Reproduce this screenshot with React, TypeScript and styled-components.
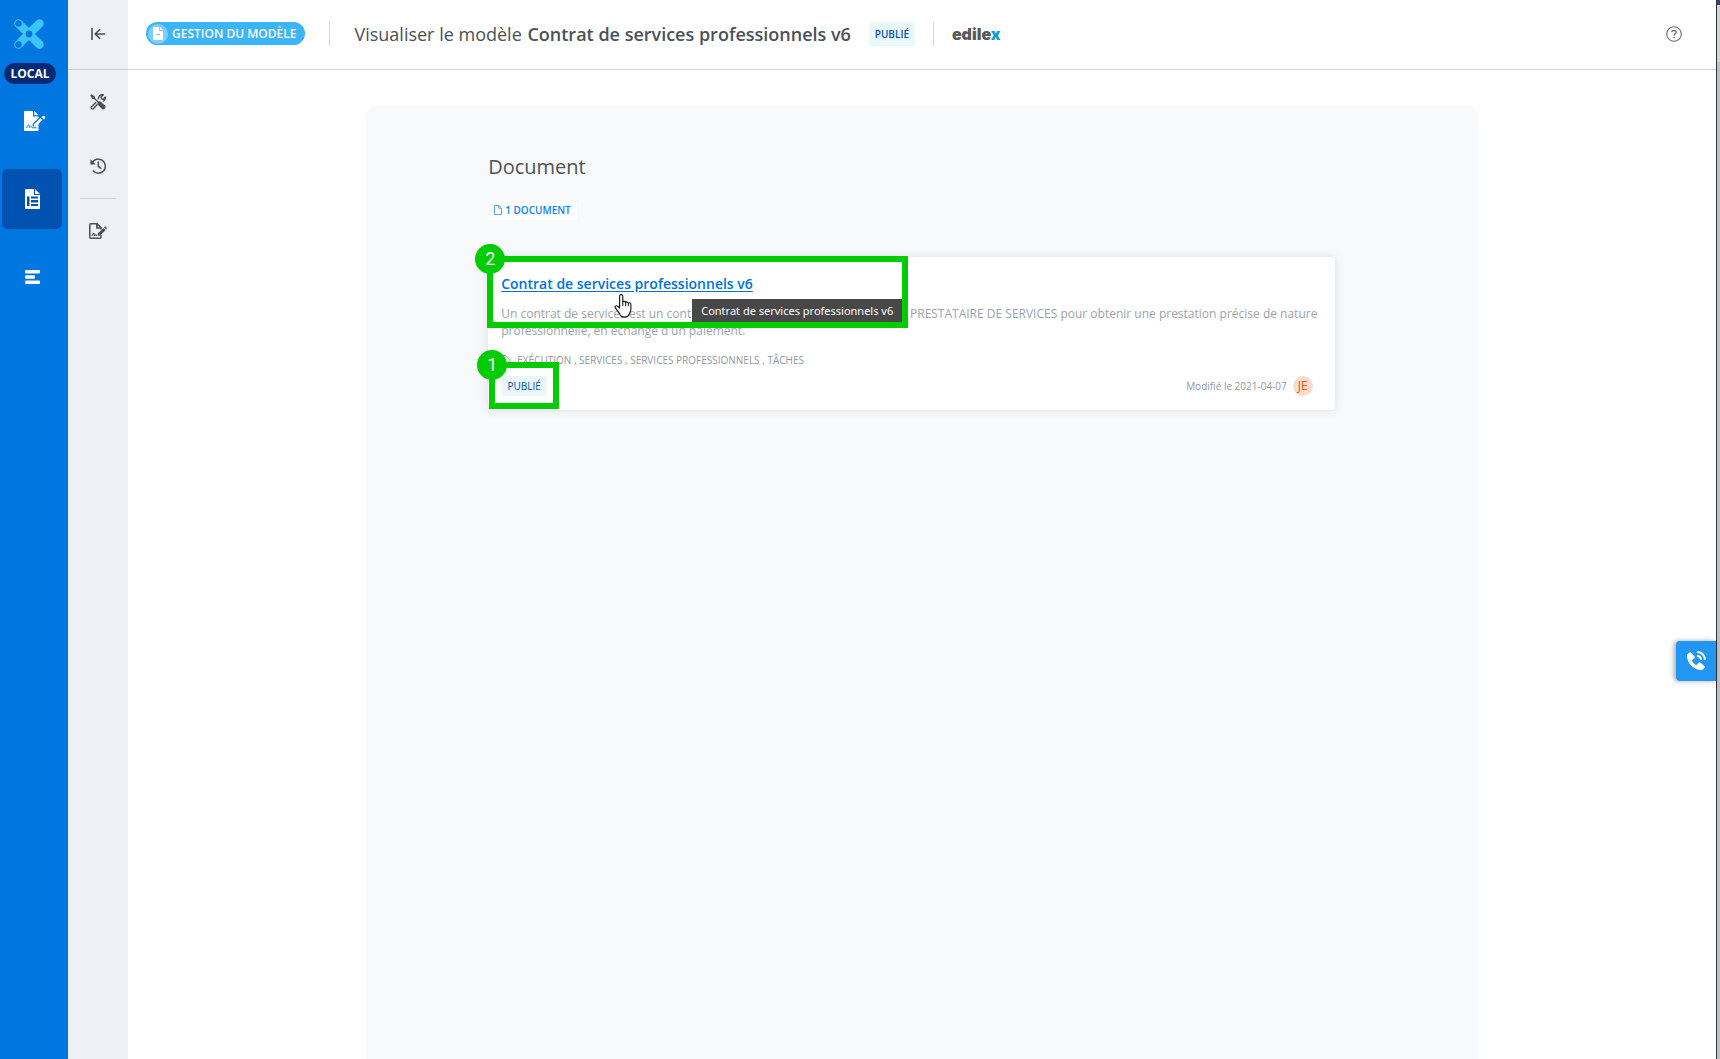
import React from "react";
import styled, { createGlobalStyle } from "styled-components";
import { BiSolidPhoneCall } from "react-icons/bi";

const GlobalStyle = createGlobalStyle`
  *, *::before, *::after { box-sizing: border-box; }
  body {
    margin: 0;
    background: #fff;
    color: #4b5157;
    font-family: "Open Sans", "Noto Sans", sans-serif;
    font-size: 12px;
  }
  button { font: inherit; color: inherit; border: 0; padding: 0; background: none; cursor: pointer; }
  h1, h2, h3, p, ul { margin: 0; padding: 0; font-weight: 400; }
  svg { display: block; flex: none; }
`;

const Shell = styled.div`
  display: flex;
  min-height: 100vh;
`;

const MainNav = styled.nav`
  display: flex;
  flex-direction: column;
  flex: 0 0 68px;
  align-items: flex-start;
  padding: 18px 2px 0;
  background: #0077e0;
  color: #fff;
`;

const LogoLink = styled.a`
  display: flex;
  margin-left: 11px;
  color: #3cc5fd;
`;

const EnvPill = styled.span`
  margin: 13px 0 7px 2px;
  width: 52px;
  line-height: 21px;
  border-radius: 11px;
  background: #012a75;
  font-size: 12px;
  font-weight: 700;
  text-align: center;
`;

const NavList = styled.div`
  display: flex;
  flex-direction: column;
  gap: 18px;
`;

const NavButton = styled.button<{ $active?: boolean }>`
  display: flex;
  align-items: center;
  justify-content: center;
  width: 60px;
  height: 60px;
  border-radius: 5px;
  background: ${(p) => (p.$active ? "#0052b1" : "transparent")};
`;

const Workspace = styled.div`
  display: flex;
  flex: 1;
  flex-direction: column;
  min-width: 0;
`;

const Header = styled.header`
  display: flex;
  height: 70px;
  border-bottom: 1px solid #ced4de;
`;

const CollapseCell = styled.div`
  display: flex;
  flex: 0 0 60px;
  align-items: center;
  justify-content: center;
  padding-bottom: 2px;
  background: #edf1f5;
`;

const HeaderBar = styled.div`
  display: flex;
  flex: 1;
  align-items: center;
  padding: 0 34px 2px 18px;
`;

const SectionPill = styled.span`
  display: flex;
  align-items: center;
  gap: 4px;
  height: 23px;
  margin-right: 24px;
  padding: 0 9px 0 2px;
  border-radius: 12px;
  background: #3bb4f8;
  color: #fff;
  font-size: 12px;
  font-weight: 600;
  white-space: nowrap;
`;

const PillIcon = styled.span`
  display: flex;
  align-items: center;
  justify-content: center;
  width: 20px;
  height: 20px;
  border-radius: 50%;
  background: #7fcdfb;
`;

const Divider = styled.span`
  width: 1px;
  height: 24px;
  background: #ced4de;
`;

const PageTitle = styled.h1`
  margin: 0 18px 0 24px;
  font-size: 18px;
  line-height: 28px;
  white-space: nowrap;
  strong { font-weight: 600; margin-left: 1px; }
`;

const StatusBadge = styled.span<{ $tall?: boolean }>`
  width: 46px;
  margin-right: ${(p) => (p.$tall ? "18px" : "0")};
  line-height: ${(p) => (p.$tall ? "24px" : "20px")};
  border-radius: 3px;
  background: #eaf8fe;
  color: #0052b1;
  font-size: 10px;
  font-weight: ${(p) => (p.$tall ? 600 : 400)};
  text-align: center;
`;

const Brand = styled.span`
  margin-left: 18px;
  color: #58595b;
  font-family: Inter, "Open Sans", sans-serif;
  font-size: 16px;
  font-weight: 900;
  line-height: 22px;
  span { color: #0e9ed5; }
`;

const HelpButton = styled.button`
  display: flex;
  margin-left: auto;
  color: #5b6b7c;
`;

const Columns = styled.div`
  display: flex;
  flex: 1;
`;

const SideTools = styled.nav`
  display: flex;
  flex: 0 0 60px;
  flex-direction: column;
  align-items: center;
  background: #edf1f5;
`;

const ToolButton = styled.button`
  display: flex;
  align-items: center;
  justify-content: center;
  width: 60px;
  height: 64px;
`;

const ToolRule = styled.hr`
  width: 36px;
  margin: 0;
  border: 0;
  border-top: 1px solid #ced4de;
`;

const Main = styled.main`
  display: flex;
  flex: 1;
  justify-content: center;
  padding-top: 36px;
`;

const Panel = styled.section`
  width: 70%;
  padding: 46px 143px 0 122px;
  border-radius: 10px 10px 0 0;
  background: #f7f9fb;
`;

const SectionTitle = styled.h2`
  font-size: 20px;
  line-height: 30px;
`;

const CountBadge = styled.span`
  display: inline-flex;
  align-items: center;
  gap: 3px;
  height: 20px;
  margin: 18px 0 37px;
  padding: 0 6px;
  border-radius: 3px;
  background: #fff;
  color: #0a84e8;
  font-size: 10px;
  font-weight: 600;
  vertical-align: top;
`;

const Card = styled.article`
  position: relative;
  padding: 17px 16px 14px 13px;
  border-radius: 4px;
  background: #fff;
  box-shadow: 0 0 10px rgba(60, 75, 90, 0.14);
`;

const CardLink = styled.a`
  color: #0072d9;
  font-size: 14px;
  font-weight: 600;
  line-height: 20px;
  text-decoration: underline;
  text-underline-offset: 2px;
`;

const Description = styled.p`
  margin-top: 11px;
  color: #9aa3ae;
  font-size: 12px;
  line-height: 17px;
`;

const Tags = styled.p`
  display: flex;
  align-items: center;
  gap: 6px;
  margin-top: 12px;
  color: #9098a3;
  font-size: 10px;
  line-height: 18px;
`;

const CardFooter = styled.footer`
  display: flex;
  align-items: center;
  margin-top: 7px;
  padding-right: 6px;
`;

const Modified = styled.span`
  margin-left: auto;
  color: #9098a3;
  font-size: 10px;
`;

const Avatar = styled.span`
  width: 20px;
  margin-left: 6px;
  border-radius: 50%;
  background: #f9dccd;
  color: #e8590c;
  font-size: 12px;
  line-height: 20px;
  text-align: center;
`;

const Callout = styled.div<{ $x: number; $y: number; $w: number; $h: number }>`
  position: absolute;
  left: ${(p) => p.$x}px;
  top: ${(p) => p.$y}px;
  width: ${(p) => p.$w}px;
  height: ${(p) => p.$h}px;
  border: 6px solid #00cc00;
  pointer-events: none;
`;

const CalloutNumber = styled.span`
  position: absolute;
  left: -18px;
  top: -18px;
  width: 30px;
  border-radius: 50%;
  background: #00cc00;
  color: #fff;
  font-family: Roboto, sans-serif;
  font-size: 18px;
  line-height: 30px;
  text-align: center;
`;

const Tooltip = styled.span`
  position: absolute;
  left: 204px;
  top: 42px;
  width: 210px;
  background: #484848;
  color: #fff;
  font-family: "Noto Sans", "Open Sans", sans-serif;
  font-size: 11px;
  line-height: 23px;
  text-align: center;
  white-space: nowrap;
`;

const Pointer = styled.svg`
  position: absolute;
  left: 126px;
  top: 37px;
`;

const CallWidget = styled.button`
  position: fixed;
  right: 4px;
  bottom: 378px;
  display: flex;
  align-items: center;
  justify-content: center;
  width: 40px;
  height: 40px;
  border-radius: 4px 0 0 4px;
  background: #2196f3;
  color: #fff;
  box-shadow: -2px 0 5px rgba(0, 0, 0, 0.35);
`;

const WindowEdge = styled.div`
  flex: 0 0 4px;
  border-left: 1px solid #2f3237;
  background: linear-gradient(#34496a 5px, #d2d3d5 5px, #d2d3d5 62px, #bfc0c3 62px);
`;

const LogoMark = () => (
  <svg width="32" height="32" viewBox="0 0 32 32" aria-hidden="true">
    <g stroke="#3cc5fd" strokeWidth="8.5" strokeLinecap="round">
      <path d="M5.5 5.5 26.5 26.5M26.5 5.5 5.5 26.5" />
    </g>
    <g fill="#0077e0">
      <circle cx="16" cy="16" r="3.4" />
      <circle cx="5.5" cy="5.5" r="3.2" />
      <circle cx="5.5" cy="26.5" r="3.2" />
    </g>
  </svg>
);

const SignedDocIcon = () => (
  <svg width="28" height="20" viewBox="-6 0 28 20" aria-hidden="true">
    <path fill="#fff" d="M1 0h8v5.5h5.5v1.8L8.6 13v2.6h2.8l3.1-3V19a1 1 0 0 1-1 1H1a1 1 0 0 1-1-1V1a1 1 0 0 1 1-1Z" />
    <path fill="#fff" d="M10.3 0 14.5 4.3h-4.2ZM9.8 13.5l6.7-6.4 2 2-6.7 6.4H9.8ZM17.5 6.2l1.2-1.1a1.2 1.2 0 0 1 1.7 0l.5.5a1.2 1.2 0 0 1 0 1.7l-1.3 1.2Z" />
    <path fill="none" stroke="#0077e0" d="M2.5 17c1-2.5 2-3.5 2.6-3.2.8.3-.5 2.8.3 2.9.8 0 1.2-1.6 1.9-1.3.6.2.4 1.4 1.4 1.4h3.8" />
  </svg>
);

const TemplateIcon = () => (
  <svg width="15" height="20" viewBox="0 0 15 20" aria-hidden="true">
    <path fill="#fff" d="M1 0h8v6h6v13a1 1 0 0 1-1 1H1a1 1 0 0 1-1-1V1a1 1 0 0 1 1-1ZM10 0l5 5h-5Z" />
    <path fill="#0052b1" d="M2 7.5h2.5V17H2ZM6 7.5h7v2H6ZM6 11h7v2.5H6ZM6 15h7v2H6Z" />
  </svg>
);

const ListIcon = () => (
  <svg width="15" height="14" viewBox="0 0 15 14" fill="#fff" aria-hidden="true">
    <rect width="15" height="3.6" rx="1" />
    <rect y="5.2" width="10" height="3.6" rx="1" />
    <rect y="10.4" width="15" height="3.6" rx="1" />
  </svg>
);

const CollapseIcon = () => (
  <svg width="14" height="12" viewBox="0 0 14 12" fill="none" stroke="#4b5157" strokeWidth="1.6" aria-hidden="true">
    <path d="M1 0v12M14 6H4.5M9 1.2 4.2 6 9 10.8" />
  </svg>
);

const ToolsIcon = () => (
  <svg width="16" height="16" viewBox="0 0 16 16" aria-hidden="true">
    <path fill="none" stroke="#4b5157" strokeWidth="1.4" strokeLinejoin="round" d="m6.2 8.4-4.9 4.3c-1 1.3.8 3.1 2.1 2.1l4.1-4.6M8.4 5.4c-.3-3 2-5.2 4.9-4.6l-2.2 2.2.3 1.9 1.9.3 2-2.1c.3 2-.8 3.6-2.4 4.2" />
    <path fill="#4b5157" d="m.2 1.6 1.4-1.4 3.3 2.2.3 1.8 3.4 3.3c.9-.4 1.9-.3 2.6.4l4 3.8c1.5 1.6-1.5 4.9-3.2 3.4l-3.9-4c-.7-.7-.8-1.7-.4-2.5L4.3 5.2l-1.9-.3Z" />
  </svg>
);

const HistoryIcon = () => (
  <svg width="16" height="16" viewBox="0 0 16 16" fill="none" stroke="#4b5157" strokeWidth="1.5" aria-hidden="true">
    <path d="M2.2 4.8A7 7 0 1 1 3.3 13M8.3 4v4.4l2.6 1.9" strokeLinecap="round" />
    <path fill="#4b5157" stroke="none" d="M.4 1.2v5.2h5.2Z" />
  </svg>
);

const EditDocIcon = () => (
  <svg width="18" height="16" viewBox="0 0 18 16" fill="none" stroke="#4b5157" strokeWidth="1.5" aria-hidden="true">
    <path d="M12 12v2.2a1 1 0 0 1-1 1H1.8a1 1 0 0 1-1-1V1.8a1 1 0 0 1 1-1h6.4L12 4.5v2M7.8 1v4H12" />
    <path strokeWidth="1.1" d="M2.8 12.8c1-2 1.7-2.6 2.1-2.3.5.4-.1 2 .5 2 .6.1.8-1 1.3-.8.5.2.4 1 1.3 1" />
    <path fill="#4b5157" stroke="none" d="m8.7 10.6 5.7-5.5 2.1 2.1-5.7 5.6H8.7Zm6.5-6.2.8-.7c.8-.6 2.4.9 1.7 1.8l-.7.8Z" />
  </svg>
);

const PillDocIcon = () => (
  <svg width="10" height="13" viewBox="0 0 10 13" aria-hidden="true">
    <path fill="#fff" d="M1 0h5v4h4v8a1 1 0 0 1-1 1H1a1 1 0 0 1-1-1V1a1 1 0 0 1 1-1ZM7 0l3 3H7Z" />
    <path stroke="#7fcdfb" d="M3 7.5h4" />
  </svg>
);

const SmallDocIcon = () => (
  <svg width="8" height="10" viewBox="0 0 8 10" fill="none" stroke="#5d9df0" aria-hidden="true">
    <path d="M.5.5h4.3l2.7 2.7v6.3h-7ZM4.8.5v2.7h2.7" />
  </svg>
);

const TagIcon = () => (
  <svg width="10" height="10" viewBox="0 0 10 10" fill="none" stroke="#9098a3" aria-hidden="true">
    <path d="M.5.5h4.3l4.6 4.6-4 4.1L.5 4.6Z" />
  </svg>
);

const HelpIcon = () => (
  <svg width="16" height="16" viewBox="0 0 16 16" fill="none" stroke="#66727f" aria-hidden="true">
    <circle cx="8" cy="8" r="7.3" strokeWidth="1.1" />
    <path strokeWidth="1.4" d="M5.7 6.3c.2-2.6 4.8-2.3 4.5 0-.2 1.5-2.1 1.4-2.1 3.1M8.1 10.8v1.4" />
  </svg>
);

export default function App() {
  return (
    <>
      <GlobalStyle />
      <Shell>
        <MainNav aria-label="Navigation principale">
          <LogoLink href="#" aria-label="Accueil"><LogoMark /></LogoLink>
          <EnvPill>LOCAL</EnvPill>
          <NavList>
            <NavButton type="button" aria-label="Documents"><SignedDocIcon /></NavButton>
            <NavButton type="button" aria-label="Modèles" $active><TemplateIcon /></NavButton>
            <NavButton type="button" aria-label="Listes"><ListIcon /></NavButton>
          </NavList>
        </MainNav>
        <Workspace>
          <Header>
            <CollapseCell>
              <button type="button" aria-label="Réduire"><CollapseIcon /></button>
            </CollapseCell>
            <HeaderBar>
              <SectionPill><PillIcon><PillDocIcon /></PillIcon>GESTION DU MODÈLE</SectionPill>
              <Divider />
              <PageTitle>Visualiser le modèle <strong>Contrat de services professionnels v6</strong></PageTitle>
              <StatusBadge $tall>PUBLIÉ</StatusBadge>
              <Divider />
              <Brand>edile<span>x</span></Brand>
              <HelpButton type="button" aria-label="Aide"><HelpIcon /></HelpButton>
            </HeaderBar>
          </Header>
          <Columns>
            <SideTools aria-label="Outils">
              <ToolButton type="button" aria-label="Configuration"><ToolsIcon /></ToolButton>
              <ToolButton type="button" aria-label="Historique"><HistoryIcon /></ToolButton>
              <ToolRule />
              <ToolButton type="button" aria-label="Éditer"><EditDocIcon /></ToolButton>
            </SideTools>
            <Main>
              <Panel>
                <SectionTitle>Document</SectionTitle>
                <CountBadge><SmallDocIcon />1 DOCUMENT</CountBadge>
                <Card>
                  <CardLink href="#">Contrat de services professionnels v6</CardLink>
                  <Description>
                    Un contrat de services est un contrat par lequel un CLIENT embauche un PRESTATAIRE DE SERVICES pour obtenir une prestation précise de nature professionnelle, en échange d'un paiement.
                  </Description>
                  <Tags><TagIcon />EXÉCUTION , SERVICES , SERVICES PROFESSIONNELS , TÂCHES</Tags>
                  <CardFooter>
                    <StatusBadge>PUBLIÉ</StatusBadge>
                    <Modified>Modifié le 2021-04-07</Modified>
                    <Avatar>JE</Avatar>
                  </CardFooter>
                  <Tooltip role="tooltip">Contrat de services professionnels v6</Tooltip>
                  <Callout $x={-1} $y={-1} $w={421} $h={72}><CalloutNumber>2</CalloutNumber></Callout>
                  <Callout $x={1} $y={105} $w={70} $h={47}><CalloutNumber>1</CalloutNumber></Callout>
                  <Pointer width="18" height="24" viewBox="0 0 18 24" aria-hidden="true">
                    <path
                      fill="#fff"
                      stroke="#111"
                      strokeWidth="1.1"
                      strokeLinejoin="round"
                      d="M5.6 14V2.3c0-2.2 3.2-2.2 3.2 0V8c.2-1 2.8-.9 2.8.5.3-1 2.7-.8 2.7.8.4-.9 2.6-.7 2.6 1v5c0 2.5-1.6 3.6-1.9 5.2-.8 3.4-7.8 3.4-8.8.4-.5-1.8-2.6-4-4.7-6.7-1.4-2 .7-3 2-2Z"
                    />
                    <path stroke="#111" d="M8.8 7v5M11.6 8.5V12M14.3 9.3V12" />
                  </Pointer>
                </Card>
              </Panel>
            </Main>
          </Columns>
        </Workspace>
        <WindowEdge />
      </Shell>
      <CallWidget type="button" aria-label="Nous appeler"><BiSolidPhoneCall size={24} /></CallWidget>
    </>
  );
}
